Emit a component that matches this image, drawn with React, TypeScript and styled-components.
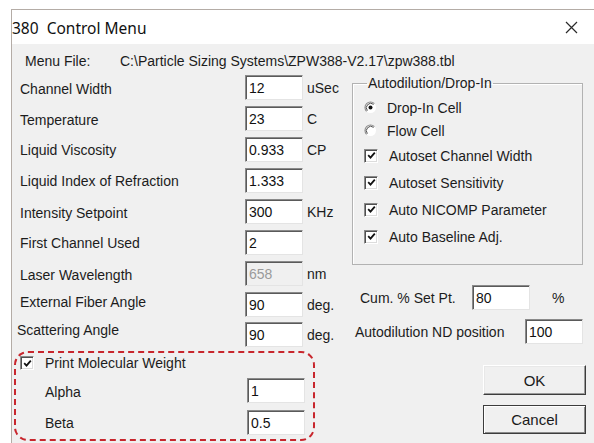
import React from 'react';
import styled, { createGlobalStyle } from 'styled-components';

const GlobalStyle = createGlobalStyle`
  html, body {
    margin: 0;
    padding: 0;
    background: #ffffff;
    overflow: hidden;
  }
  body {
    font-family: "Liberation Sans", Arial, sans-serif;
    font-size: 14px;
    color: #1c1c1c;
  }
`;

const Window = styled.div`
  margin: 9px 0 0 11px;
  height: 434px;
  border-top: 1px solid #b4aca6;
  border-left: 1px solid #b4aca6;
  background: #f0f0f0;
  display: flex;
  flex-direction: column;
  overflow: hidden;
`;

const TitleBar = styled.div`
  height: 34px;
  flex: none;
  background: #ffffff;
  display: flex;
  align-items: center;
  justify-content: space-between;
  padding: 0 16px 0 0;
`;

const Title = styled.span`
  font-family: "Noto Sans", "Open Sans", sans-serif;
  font-size: 15.5px;
  color: #111;
  white-space: pre;
  margin-top: 1px;
`;

const CloseGlyph = styled.svg`
  width: 13px;
  height: 13px;
  margin-top: 1px;
`;

const Body = styled.div`
  flex: 1;
  display: flex;
  flex-direction: column;
`;

const MenuFileRow = styled.div`
  height: 31px;
  display: flex;
  align-items: center;
  padding: 3px 0 0 13px;
  box-sizing: border-box;
`;

const MenuLabel = styled.span`
  width: 95px;
`;

const Columns = styled.div`
  display: flex;
  padding-left: 2px;
`;

const LeftCol = styled.div`
  width: 338px;
  display: flex;
  flex-direction: column;
`;

const FieldRow = styled.div<{ $h: number }>`
  height: ${(p) => p.$h}px;
  display: flex;
  align-items: flex-start;
  padding-left: 6px;
`;

const FieldLabel = styled.span<{ $w?: number; $dy?: number; $dx?: number }>`
  width: ${(p) => p.$w ?? 225}px;
  line-height: 25px;
  margin-top: ${(p) => p.$dy ?? 1}px;
  margin-left: ${(p) => p.$dx ?? 0}px;
  margin-right: ${(p) => -(p.$dx ?? 0)}px;
  white-space: nowrap;
`;

const TextBox = styled.div<{ $disabled?: boolean }>`
  width: 58px;
  height: 25px;
  box-sizing: border-box;
  flex: none;
  background: ${(p) => (p.$disabled ? '#f0f0f0' : '#ffffff')};
  color: ${(p) => (p.$disabled ? '#9a9a9a' : '#111')};
  border-top: 1px solid #8a8a8a;
  border-left: 1px solid #8a8a8a;
  border-bottom: 1px solid #e4e4e4;
  border-right: 1px solid #e4e4e4;
  box-shadow: inset 1px 1px 0 #5a5a5a;
  padding: 0 0 0 3px;
  line-height: 24px;
  font-size: 14px;
`;

const Unit = styled.span`
  margin-left: 4px;
  line-height: 25px;
  margin-top: 1px;
`;

// dashed call-out around the molecular weight settings
const Highlight = styled.div`
  margin-top: -1px;
  width: 301px;
  height: 90px;
  box-sizing: border-box;
  border: 2px dashed #c8262d;
  border-radius: 14px;
  display: flex;
  flex-direction: column;
  gap: 3px;
`;

const CheckRow = styled.label<{ $h: number; $gap: number; $pad?: number }>`
  height: ${(p) => p.$h}px;
  display: flex;
  align-items: center;
  gap: ${(p) => p.$gap}px;
  padding-left: ${(p) => p.$pad ?? 0}px;
  white-space: nowrap;
`;

const Box = styled.span`
  width: 14px;
  height: 14px;
  box-sizing: border-box;
  flex: none;
  background: #ffffff;
  border-top: 1px solid #8a8a8a;
  border-left: 1px solid #8a8a8a;
  border-bottom: 1px solid #ffffff;
  border-right: 1px solid #ffffff;
  box-shadow: inset 1px 1px 0 #505050, inset -1px -1px 0 #dcdcdc;
  display: flex;
  align-items: center;
  justify-content: center;
`;

const SubRow = styled.div`
  height: 29px;
  display: flex;
  align-items: center;
  padding-left: 29px;
`;

const RightCol = styled.div`
  flex: 1;
  display: flex;
  flex-direction: column;
`;

const GroupBox = styled.fieldset`
  margin: 0;
  width: 231px;
  box-sizing: border-box;
  border: 1px solid #b2b2b2;
  box-shadow: inset 1px 1px 0 #ffffff;
  padding: 5px 0 14px 11px;
  display: flex;
  flex-direction: column;
`;

const Legend = styled.legend`
  padding: 0 1px;
  margin-left: 3px;
  line-height: 16px;
`;

const RadioGlyph = styled.svg`
  width: 13px;
  height: 13px;
  flex: none;
`;

const SetRow = styled.div<{ $top: number; $pad: number; $w: number }>`
  margin-top: ${(p) => p.$top}px;
  height: 25px;
  display: flex;
  align-items: center;
  padding-left: ${(p) => p.$pad}px;

  & > span:first-child {
    width: ${(p) => p.$w}px;
    white-space: nowrap;
  }
`;

const Percent = styled.span`
  margin-left: 22px;
`;

const ButtonStack = styled.div`
  margin: 21px 0 0 131px;
  display: flex;
  flex-direction: column;
  gap: 10px;
`;

const DialogButton = styled.button<{ $default?: boolean; $h: number }>`
  width: 103px;
  height: ${(p) => p.$h}px;
  box-sizing: border-box;
  background: #f0f0f0;
  font-family: "Liberation Sans", Arial, sans-serif;
  font-size: 15px;
  color: #1a1a1a;
  padding: 0;
  border: 1px solid ${(p) => (p.$default ? '#3c3c3c' : '#ffffff')};
  border-right-color: #3c3c3c;
  border-bottom-color: #3c3c3c;
  box-shadow: ${(p) =>
    p.$default
      ? 'inset 1px 1px 0 #ffffff, inset -1px -1px 0 #8a8a8a'
      : 'inset -1px -1px 0 #9a9a9a, inset 1px 1px 0 #e8e8e8'};
`;

const CheckMark = () => (
  <svg width="9" height="9" viewBox="0 0 9 9">
    <path d="M1.2 4.2 L3.5 6.6 L7.8 1.6" fill="none" stroke="#111" strokeWidth="1.8" />
  </svg>
);

const Radio = ({ on }: { on?: boolean }) => (
  <RadioGlyph viewBox="0 0 13 13">
    <circle cx="6.5" cy="6.5" r="5.5" fill="#ffffff" />
    <path d="M2.6 10.4 A5.5 5.5 0 0 1 10.4 2.6" fill="none" stroke="#8a8a8a" strokeWidth="1.1" />
    <path d="M3.4 9.6 A4.4 4.4 0 0 1 9.6 3.4" fill="none" stroke="#505050" strokeWidth="1" />
    {on && <circle cx="6.5" cy="6.5" r="2" fill="#111" />}
  </RadioGlyph>
);

const Check = () => (
  <Box>
    <CheckMark />
  </Box>
);

type Field = { label: string; value: string; unit?: string; h: number; dy?: number; dx?: number; disabled?: boolean };

const fields: Field[] = [
  { label: 'Channel Width', value: '12', unit: 'uSec', h: 31, dy: 2 },
  { label: 'Temperature', value: '23', unit: 'C', h: 31, dy: 2 },
  { label: 'Liquid Viscosity', value: '0.933', unit: 'CP', h: 31 },
  { label: 'Liquid Index of Refraction', value: '1.333', h: 31 },
  { label: 'Intensity Setpoint', value: '300', unit: 'KHz', h: 31, dy: 2 },
  { label: 'First Channel Used', value: '2', h: 31 },
  { label: 'Laser Wavelength', value: '658', unit: 'nm', h: 31, disabled: true, dy: 2 },
  { label: 'External Fiber Angle', value: '90', unit: 'deg.', h: 30, dy: -2 },
  { label: 'Scattering Angle', value: '90', unit: 'deg.', h: 30, dy: -4, dx: -3 },
];

const options = [
  'Autoset Channel Width',
  'Autoset Sensitivity',
  'Auto NICOMP Parameter',
  'Auto Baseline Adj.',
];

const App: React.FC = () => {
  return (
    <>
      <GlobalStyle />
      <Window>
        <TitleBar>
          <Title>{'380  Control Menu'}</Title>
          <CloseGlyph viewBox="0 0 13 13">
            <path d="M1 1 L12 12 M12 1 L1 12" stroke="#2a2a2a" strokeWidth="1.2" />
          </CloseGlyph>
        </TitleBar>

        <Body>
          <MenuFileRow>
            <MenuLabel>Menu File:</MenuLabel>
            <span>C:\Particle Sizing Systems\ZPW388-V2.17\zpw388.tbl</span>
          </MenuFileRow>

          <Columns>
            <LeftCol>
              {fields.map((f) => (
                <FieldRow key={f.label} $h={f.h}>
                  <FieldLabel $dy={f.dy} $dx={f.dx}>{f.label}</FieldLabel>
                  <TextBox $disabled={f.disabled}>{f.value}</TextBox>
                  {f.unit && <Unit>{f.unit}</Unit>}
                </FieldRow>
              ))}

              <Highlight>
                <CheckRow $h={20} $gap={11} $pad={4}>
                  <Check />
                  Print Molecular Weight
                </CheckRow>
                <SubRow>
                  <FieldLabel $w={202} $dy={4}>Alpha</FieldLabel>
                  <TextBox>1</TextBox>
                </SubRow>
                <SubRow>
                  <FieldLabel $w={202} $dy={2}>Beta</FieldLabel>
                  <TextBox>0.5</TextBox>
                </SubRow>
              </Highlight>
            </LeftCol>

            <RightCol>
              <GroupBox>
                <Legend>Autodilution/Drop-In</Legend>
                <CheckRow $h={23} $gap={10}>
                  <Radio on />
                  Drop-In Cell
                </CheckRow>
                <CheckRow $h={23} $gap={10}>
                  <Radio />
                  Flow Cell
                </CheckRow>
                {options.map((o) => (
                  <CheckRow key={o} $h={27} $gap={11}>
                    <Check />
                    {o}
                  </CheckRow>
                ))}
              </GroupBox>

              <SetRow $top={20} $pad={8} $w={112}>
                <span>Cum. % Set Pt.</span>
                <TextBox>80</TextBox>
                <Percent>%</Percent>
              </SetRow>
              <SetRow $top={9} $pad={3} $w={170}>
                <span>Autodilution ND position</span>
                <TextBox>100</TextBox>
              </SetRow>

              <ButtonStack>
                <DialogButton $h={30}>OK</DialogButton>
                <DialogButton $h={29} $default>
                  Cancel
                </DialogButton>
              </ButtonStack>
            </RightCol>
          </Columns>
        </Body>
      </Window>
    </>
  );
};

export default App;
